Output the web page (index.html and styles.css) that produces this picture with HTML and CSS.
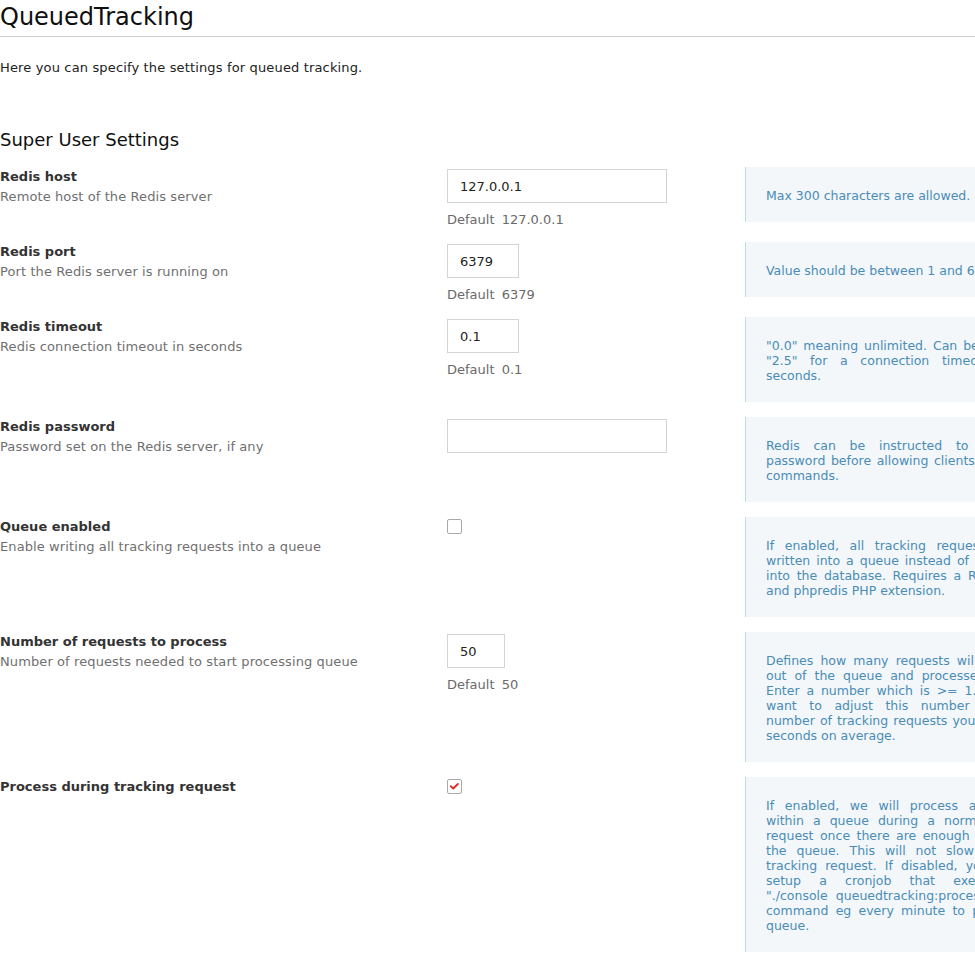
FILE: index.html
```html
<!DOCTYPE html>
<html lang="en">
<head>
<meta charset="utf-8">
<title>QueuedTracking</title>
<link rel="stylesheet" href="styles.css">
</head>
<body>
<div class="page">
  <h1 class="page-title">QueuedTracking</h1>
  <p class="intro">Here you can specify the settings for queued tracking.</p>
  <h2 class="section-title">Super User Settings</h2>

  <div class="setting">
    <div class="setting-label">
      <div class="name">Redis host</div>
      <div class="desc">Remote host of the Redis server</div>
    </div>
    <div class="setting-field">
      <input class="text-input w-wide" type="text" value="127.0.0.1">
      <div class="default">Default <span class="default-value">127.0.0.1</span></div>
    </div>
    <div class="help">
      <span class="ln">Max 300 characters are allowed.</span>
    </div>
  </div>

  <div class="setting">
    <div class="setting-label">
      <div class="name">Redis port</div>
      <div class="desc">Port the Redis server is running on</div>
    </div>
    <div class="setting-field">
      <input class="text-input w-short" type="text" value="6379">
      <div class="default">Default <span class="default-value">6379</span></div>
    </div>
    <div class="help">
      <span class="ln">Value should be between 1 and 65535.</span>
    </div>
  </div>

  <div class="setting">
    <div class="setting-label">
      <div class="name">Redis timeout</div>
      <div class="desc">Redis connection timeout in seconds</div>
    </div>
    <div class="setting-field">
      <input class="text-input w-short" type="text" value="0.1">
      <div class="default">Default <span class="default-value">0.1</span></div>
    </div>
    <div class="help">
      <span class="ln">"0.0" meaning unlimited. Can be a float eg</span>
      <span class="ln">"2.5" for a connection timeout of 2.5</span>
      <span class="ln">seconds.</span>
    </div>
  </div>

  <div class="setting">
    <div class="setting-label">
      <div class="name">Redis password</div>
      <div class="desc">Password set on the Redis server, if any</div>
    </div>
    <div class="setting-field">
      <input class="text-input w-wide" type="password" value="">
    </div>
    <div class="help">
      <span class="ln">Redis can be instructed to require a</span>
      <span class="ln">password before allowing clients to execute</span>
      <span class="ln">commands.</span>
    </div>
  </div>

  <div class="setting">
    <div class="setting-label">
      <div class="name">Queue enabled</div>
      <div class="desc">Enable writing all tracking requests into a queue</div>
    </div>
    <div class="setting-field">
      <span class="checkbox"></span>
    </div>
    <div class="help">
      <span class="ln">If enabled, all tracking requests will be</span>
      <span class="ln">written into a queue instead of the directly</span>
      <span class="ln">into the database. Requires a Redis server</span>
      <span class="ln">and phpredis PHP extension.</span>
    </div>
  </div>

  <div class="setting">
    <div class="setting-label">
      <div class="name">Number of requests to process</div>
      <div class="desc">Number of requests needed to start processing queue</div>
    </div>
    <div class="setting-field">
      <input class="text-input w-num" type="text" value="50">
      <div class="default">Default <span class="default-value">50</span></div>
    </div>
    <div class="help">
      <span class="ln">Defines how many requests will be picked</span>
      <span class="ln">out of the queue and processed at once.</span>
      <span class="ln">Enter a number which is &gt;= 1. You might</span>
      <span class="ln">want to adjust this number based on</span>
      <span class="ln">number of tracking requests you get per 10</span>
      <span class="ln">seconds on average.</span>
    </div>
  </div>

  <div class="setting">
    <div class="setting-label">
      <div class="name">Process during tracking request</div>
    </div>
    <div class="setting-field">
      <span class="checkbox is-checked">
        <svg viewBox="0 0 15 15" width="13" height="13" aria-hidden="true"><path d="M3.2 7.2 L6 9.8 L11.4 4.6" fill="none" stroke="#d9302c" stroke-width="2.2" stroke-linecap="round" stroke-linejoin="round"/></svg>
      </span>
    </div>
    <div class="help">
      <span class="ln">If enabled, we will process all requests</span>
      <span class="ln">within a queue during a normal tracking</span>
      <span class="ln">request once there are enough requests in</span>
      <span class="ln">the queue. This will not slow down the</span>
      <span class="ln">tracking request. If disabled, you have to</span>
      <span class="ln">setup a cronjob that executes the</span>
      <span class="ln">"./console queuedtracking:process" console</span>
      <span class="ln">command eg every minute to process the</span>
      <span class="ln">queue.</span>
    </div>
  </div>
</div>
</body>
</html>
```

FILE: styles.css
```css
html, body {
  margin: 0;
  padding: 0;
  overflow: hidden;
  background: #ffffff;
}

body {
  font-family: "DejaVu Sans", Verdana, sans-serif;
  font-size: 13px;
  color: #222222;
}

.page {
  width: 1100px;
}

.page-title {
  margin: 0;
  padding: 2px 0 4px;
  font-size: 24px;
  line-height: 30px;
  font-weight: normal;
  color: #0f0f0f;
  border-bottom: 1px solid #cccccc;
  width: 975px;
}

.intro {
  margin: 21px 0 0;
  line-height: 20px;
  color: #222222;
  letter-spacing: 0.15px;
}

.section-title {
  margin: 50px 0 15px;
  font-size: 18px;
  line-height: 24px;
  font-weight: normal;
  color: #0f0f0f;
}

.setting {
  display: grid;
  grid-template-columns: 447px 298px 323px;
  align-items: start;
  margin-bottom: 15px;
}

.setting-label .name {
  font-weight: bold;
  line-height: 20px;
  color: #333333;
}

.setting-label .desc {
  line-height: 20px;
  color: #707070;
  letter-spacing: 0.1px;
}

.setting-field {
  padding-top: 2px;
}

.text-input {
  display: block;
  box-sizing: border-box;
  height: 34px;
  margin: 0;
  padding: 0 12px;
  border: 1px solid #d4d4d4;
  border-radius: 0;
  background: #ffffff;
  font-family: "DejaVu Sans", Verdana, sans-serif;
  font-size: 13px;
  color: #222222;
  outline: none;
}

.w-wide { width: 220px; }
.w-short { width: 72px; }
.w-num { width: 58px; }

.default {
  margin-top: 9px;
  line-height: 15px;
  color: #6a6a6a;
}

.default-value {
  margin-left: 3px;
}

.checkbox {
  display: flex;
  align-items: center;
  justify-content: center;
  box-sizing: border-box;
  width: 15px;
  height: 15px;
  border: 1px solid #a9a9a9;
  border-radius: 2px;
  background: #ffffff;
}

.help {
  box-sizing: border-box;
  padding: 21px 20px 19px;
  border-left: 1px solid #bcdcec;
  background: #f3f7fa;
  color: #4a8cb6;
  font-size: 12.5px;
  line-height: 15px;
  text-align: justify;
}

.help .ln {
  display: block;
  text-align-last: justify;
}

.help .ln:last-child {
  text-align-last: left;
}
```
